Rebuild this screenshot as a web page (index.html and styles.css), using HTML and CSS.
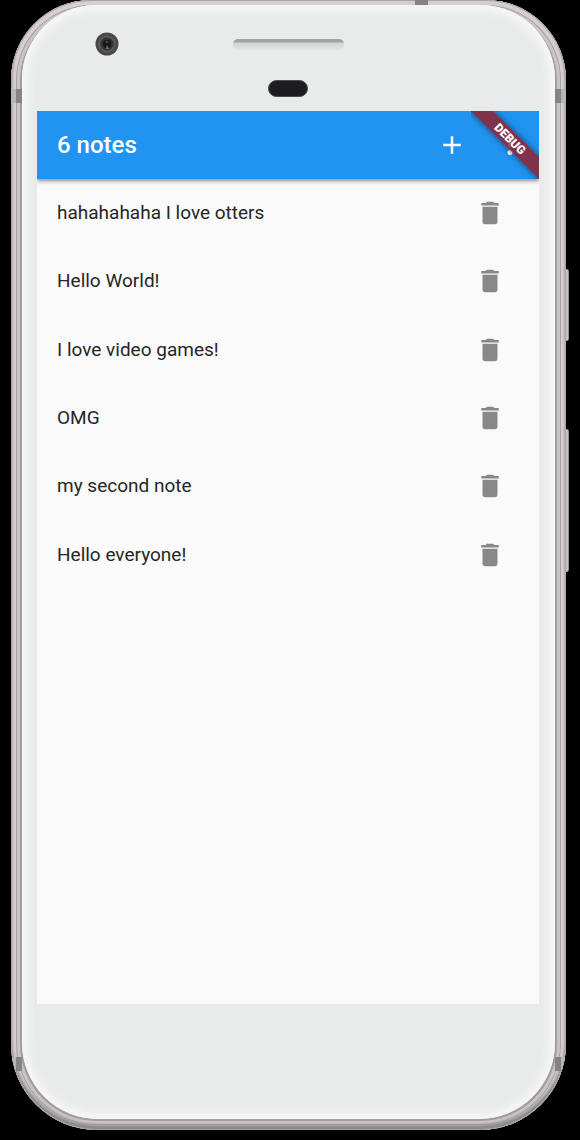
FILE: index.html
```html
<!DOCTYPE html>
<html lang="en">
<head>
<meta charset="utf-8">
<meta name="viewport" content="width=device-width, initial-scale=1">
<title>Notes</title>
<link rel="stylesheet" href="styles.css">
</head>
<body>
<svg class="sprite" aria-hidden="true">
  <symbol id="trash" viewBox="0 0 24 24"><path d="M6 19c0 1.100.9 2 2 2h8c1.100 0 2-.9 2-2V7H6v12zM19 4h-3.500l-1-1h-5l-1 1H5v2h14V4z"/></symbol>
</svg>
<div class="phone">
  <span class="key key-power"></span>
  <span class="key key-volume"></span>
  <div class="frame">
    <span class="band band-top"></span>
    <span class="band band-left band-upper"></span>
    <span class="band band-right band-upper"></span>
    <span class="band band-left band-lower"></span>
    <span class="band band-right band-lower"></span>
    <div class="glass">
      <div class="forehead">
        <svg class="camera" viewBox="0 0 24 24" aria-hidden="true">
          <circle cx="12" cy="12" r="11.500" fill="#474747"/>
          <circle cx="12" cy="12" r="9" fill="#565656"/>
          <circle cx="12" cy="12" r="6.500" fill="#303030"/>
          <circle cx="12" cy="12" r="4" fill="#161616"/>
          <circle cx="12" cy="10" r="1.300" fill="#4a4a4a"/>
          <path d="M12 13l2 4h-3z" fill="#707070"/>
        </svg>
        <span class="speaker"></span>
        <span class="sensor"></span>
      </div>
      <main class="screen">
        <header class="appbar">
          <h1 class="title">6 notes</h1>
          <button class="icon-button" type="button" aria-label="Add note">
            <svg class="icon" viewBox="0 0 24 24"><path d="M19 13h-6v6h-2v-6H5v-2h6V5h2v6h6v2z"/></svg>
          </button>
          <button class="icon-button" type="button" aria-label="More options">
            <svg class="icon" viewBox="0 0 24 24"><circle cx="12" cy="6" r="2"/><circle cx="12" cy="12" r="2"/><circle cx="12" cy="18" r="2"/></svg>
          </button>
          <div class="corner"><span class="banner">DEBUG</span></div>
        </header>
        <ul class="notes">
          <li class="note"><span>hahahahaha I love otters</span><button class="icon-button" type="button" aria-label="Delete hahahahaha I love otters"><svg class="icon"><use href="#trash"/></svg></button></li>
          <li class="note"><span>Hello World!</span><button class="icon-button" type="button" aria-label="Delete Hello World!"><svg class="icon"><use href="#trash"/></svg></button></li>
          <li class="note"><span>I love video games!</span><button class="icon-button" type="button" aria-label="Delete I love video games!"><svg class="icon"><use href="#trash"/></svg></button></li>
          <li class="note"><span>OMG</span><button class="icon-button" type="button" aria-label="Delete OMG"><svg class="icon"><use href="#trash"/></svg></button></li>
          <li class="note"><span>my second note</span><button class="icon-button" type="button" aria-label="Delete my second note"><svg class="icon"><use href="#trash"/></svg></button></li>
          <li class="note"><span>Hello everyone!</span><button class="icon-button" type="button" aria-label="Delete Hello everyone!"><svg class="icon"><use href="#trash"/></svg></button></li>
        </ul>
      </main>
    </div>
  </div>
</div>
</body>
</html>
```
FILE: styles.css
```css
* {
  box-sizing: border-box;
}

body {
  margin: 0;
  background: #000;
  font-family: Roboto, "Noto Sans", sans-serif;
}

.sprite {
  position: absolute;
  width: 0;
  height: 0;
}

.phone {
  position: relative;
  display: flex;
  min-height: 100vh;
  padding: 0 14px 10px 11px;
}

.frame {
  position: relative;
  flex: 1;
  display: flex;
  padding: 5px 11px 11px;
  overflow: hidden;
  border-radius: 80px 80px 86px 86px;
  background: #a39d9f;
  box-shadow:
    inset 0 0 0 1px #aaa4a6,
    inset 0 -4px 3px 1px #8b8889,
    inset 0 0 0 5px #d6ced1,
    inset 0 0 0 6px #a8a2a4,
    inset 0 0 0 9px #cbc4c6;
}

.key {
  position: absolute;
  right: 11px;
  width: 4px;
  border-radius: 0 3px 3px 0;
  background: #c9c3c5;
  border-right: 1px solid #979294;
}

.key-power {
  top: 269px;
  height: 72px;
}

.key-volume {
  top: 429px;
  height: 143px;
}

.band {
  position: absolute;
  width: 11px;
  height: 14px;
  background: linear-gradient(90deg, #b8b5b6 50%, #858283 50%);
}

.band-top {
  top: 0;
  right: 138px;
  width: 13px;
  height: 5px;
  background: #858283;
}

.band-left {
  left: 0;
}

.band-right {
  right: 0;
  transform: scaleX(-1);
}

.band-upper {
  top: 89px;
}

.band-lower {
  bottom: 59px;
}

.glass {
  position: relative;
  flex: 1;
  display: flex;
  flex-direction: column;
  padding: 0 16px 115px 15px;
  border-radius: 74px 74px 76px 76px;
  background: #e8ebea;
  box-shadow: inset 0 0 10px 5px #f7f8f8;
}

.forehead {
  display: grid;
  grid-template-columns: 1fr auto 1fr;
  grid-template-rows: 24px 17px;
  row-gap: 24px;
  align-items: center;
  padding: 27px 0 14px;
}

.camera {
  width: 24px;
  height: 24px;
  margin-left: 58px;
}

.speaker {
  width: 111px;
  height: 11px;
  border-radius: 5px;
  background: linear-gradient(#a2a4a4 0 25%, #d3d6d8 40%, #e2e4e6);
}

.sensor {
  grid-column: 2;
  justify-self: center;
  width: 40px;
  height: 17px;
  border-radius: 9px;
  background: #1d1d1f;
  border: 1px solid #4a4b4c;
}

.screen {
  flex: 1;
  background: #fafafa;
}

.appbar {
  position: relative;
  display: flex;
  align-items: center;
  height: 68px;
  padding-left: 20px;
  background: #2094f0;
  color: #fff;
  box-shadow: 0 2px 4px rgba(50, 30, 40, 0.5);
  clip-path: inset(0 0 -12px);
}

.title {
  flex: 1;
  margin: 0;
  font-size: 24px;
  line-height: 32px;
  font-weight: 500;
}

.icon-button {
  display: flex;
  align-items: center;
  justify-content: center;
  width: 58px;
  height: 58px;
  padding: 0;
  border: 0;
  background: none;
  color: inherit;
}

.icon {
  width: 30px;
  height: 30px;
  fill: currentColor;
}

.corner {
  position: absolute;
  top: 0;
  right: 0;
  width: 68px;
  height: 68px;
  overflow: hidden;
  pointer-events: none;
}

.banner {
  position: absolute;
  top: 20px;
  right: -26px;
  width: 110px;
  transform: rotate(45deg);
  background: rgba(145, 30, 42, 0.83);
  box-shadow: 0 0 7px rgba(0, 0, 0, 0.5);
  font-size: 12px;
  line-height: 16px;
  font-weight: 900;
  text-align: center;
}

.notes {
  display: grid;
  grid-template-rows: repeat(6, 1fr);
  height: 410px;
  margin: 0;
  padding: 0;
  list-style: none;
}

.note {
  display: flex;
  align-items: center;
  justify-content: space-between;
  padding: 0 20px;
  font-size: 19px;
  line-height: 28px;
  color: #262626;
}

.note .icon-button {
  color: #888;
}
```
